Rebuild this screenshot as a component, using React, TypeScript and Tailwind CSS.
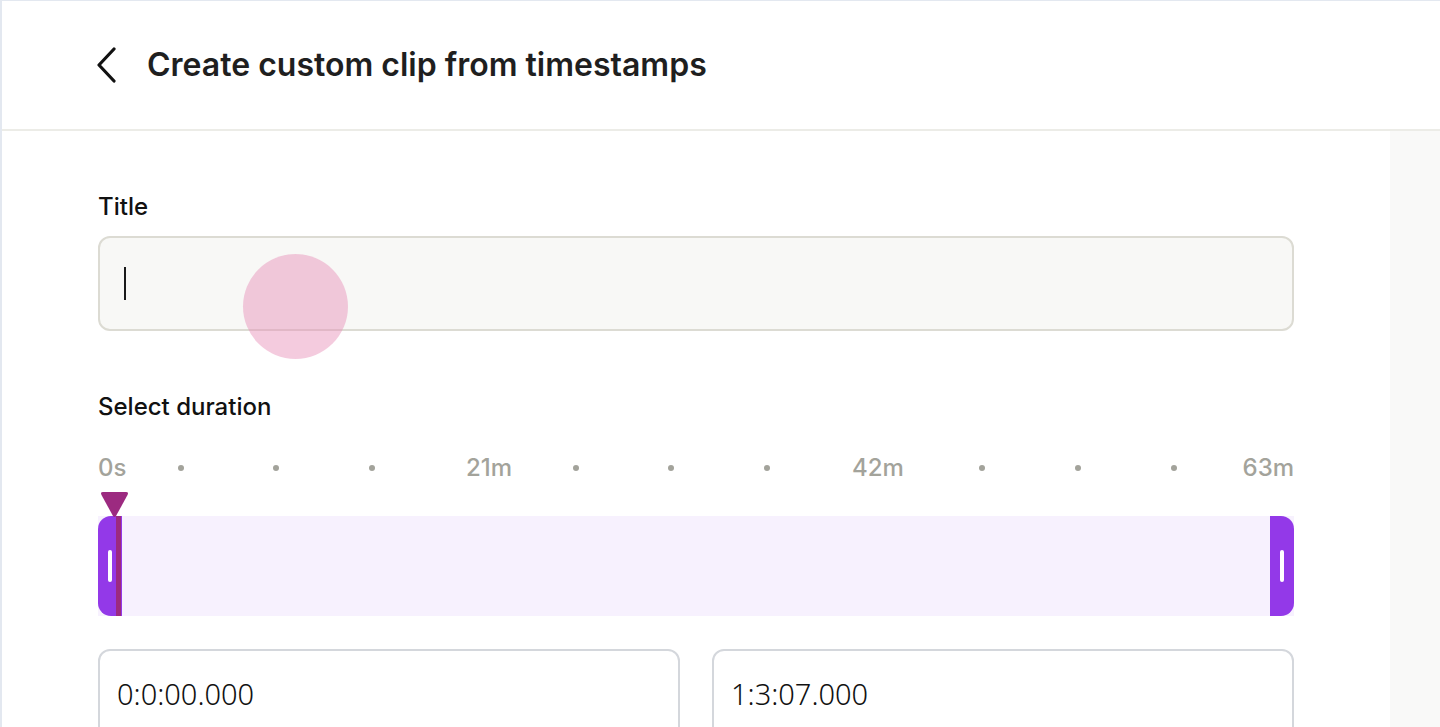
import React from "react";

const ticks: { kind: "label" | "dot"; text?: string; x: number; align?: "left" | "right" }[] = [
  { kind: "label", text: "0s", x: 0, align: "left" },
  { kind: "dot", x: 80 },
  { kind: "dot", x: 175 },
  { kind: "dot", x: 271 },
  { kind: "label", text: "21m", x: 368, align: "left" },
  { kind: "dot", x: 475 },
  { kind: "dot", x: 570 },
  { kind: "dot", x: 666 },
  { kind: "label", text: "42m", x: 754, align: "left" },
  { kind: "dot", x: 881 },
  { kind: "dot", x: 977 },
  { kind: "dot", x: 1073 },
  { kind: "label", text: "63m", x: 0, align: "right" },
];

export default function App() {
  return (
    <div
      className="relative h-[727px] w-full overflow-hidden border-l-2 border-t border-[#e3e8f0] bg-white flex flex-col"
      style={{ fontFamily: "Inter, 'Noto Sans', sans-serif" }}
    >
      <header className="h-[130px] shrink-0 border-b-2 border-[#ecece7] flex items-center pl-[91px]">
        <button className="w-[26px] h-[40px] flex items-center justify-center mr-[28px] text-[#111]">
          <svg width="22" height="36" viewBox="0 0 22 36" fill="none">
            <path d="M19 2 L4 18 L19 34" stroke="currentColor" strokeWidth="3.2" strokeLinecap="round" strokeLinejoin="round" />
          </svg>
        </button>
        <h1 className="text-[32px] font-semibold text-[#1f1f1f] tracking-[0px]">Create custom clip from timestamps</h1>
      </header>
      <div className="flex flex-1 min-h-0">
        <main className="w-[1388px] shrink-0 pl-[96px] pr-[96px] pt-[61px]">
          <label className="block text-[24px] font-medium text-[#111] leading-[30px]">Title</label>
          <div className="mt-[14px] h-[95px] rounded-[12px] border-2 border-[#dcdbd3] bg-[#f8f8f6] flex items-center pl-[24px]">
            <div className="w-[2px] h-[33px] bg-[#1a1a1a]" />
          </div>

          <label className="block mt-[61px] text-[24px] font-medium text-[#111] leading-[30px]">Select duration</label>

          <div className="relative mt-[31px] h-[30px]">
            {ticks.map((t, i) =>
              t.kind === "dot" ? (
                <span
                  key={i}
                  className="absolute top-[12px] w-[6px] h-[6px] rounded-full bg-[#a3a39b]"
                  style={{ left: t.x }}
                />
              ) : (
                <span
                  key={i}
                  className="absolute top-0 text-[24px] font-medium leading-[30px] text-[#a3a39b]"
                  style={t.align === "right" ? { right: 0 } : { left: t.x }}
                >
                  {t.text}
                </span>
              )
            )}
          </div>

          <div className="relative mt-[33px] h-[100px] bg-[#f7f1fe] flex justify-between">
            <div className="w-[24px] h-full bg-[#9339e8] rounded-l-[13px] flex items-center justify-center">
              <div className="w-[4px] h-[32px] rounded-full bg-white" />
            </div>
            <div className="w-[24px] h-full bg-[#9339e8] rounded-r-[13px] flex items-center justify-center">
              <div className="w-[4px] h-[32px] rounded-full bg-white" />
            </div>
            <div className="absolute left-[18px] top-0 h-full w-[5px] bg-[#9c2a80]" />
            <svg className="absolute left-[2px] top-[-24px]" width="29" height="26" viewBox="0 0 29 26">
              <path d="M3 0 H26 Q29 0 27.5 3 L16 24 Q14.5 26 13 24 L1.5 3 Q0 0 3 0 Z" fill="#9c2a80" />
            </svg>
          </div>

          <div className="mt-[33px] grid grid-cols-2 gap-[32px]">
            <div className="h-[90px] rounded-[12px] border-2 border-[#d4d7dc] flex items-start pt-[25px] pl-[17px]">
              <span className="text-[29px] text-[#111] leading-[36px]" style={{ fontFamily: "'Noto Sans', sans-serif", fontWeight: 300 }}>0:0:00.000</span>
            </div>
            <div className="h-[90px] rounded-[12px] border-2 border-[#d4d7dc] flex items-start pt-[25px] pl-[17px]">
              <span className="text-[29px] text-[#111] leading-[36px]" style={{ fontFamily: "'Noto Sans', sans-serif", fontWeight: 300 }}>1:3:07.000</span>
            </div>
          </div>
        </main>
        <aside className="flex-1 bg-[#f9f9f8]" />
      </div>
      <div className="pointer-events-none absolute left-[241px] top-[253px] w-[105px] h-[105px] rounded-full bg-[#e68cb6]/45" />
    </div>
  );
}
